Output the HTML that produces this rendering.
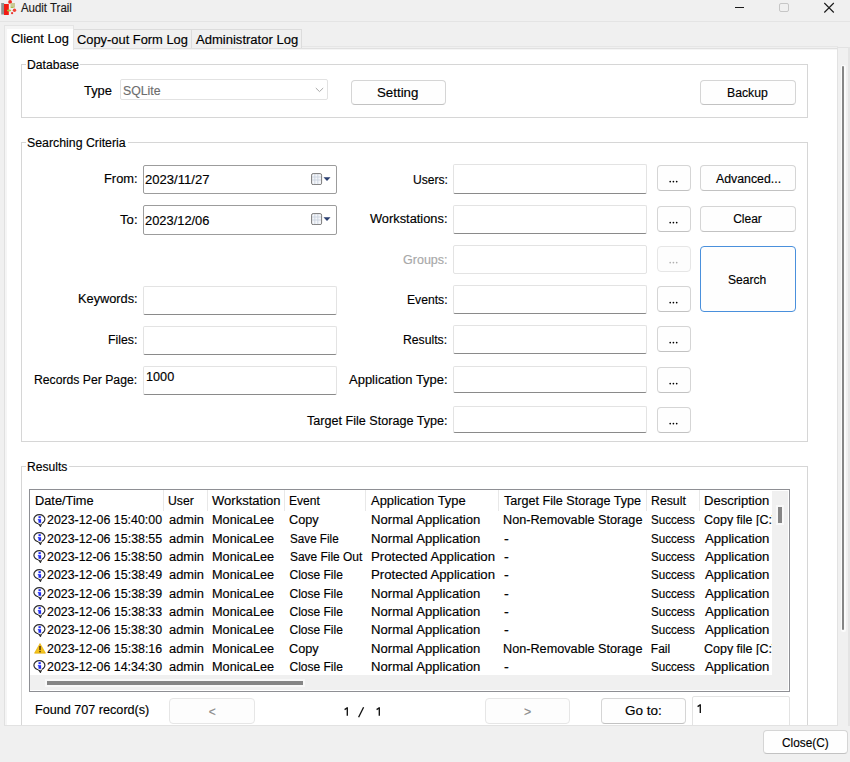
<!DOCTYPE html>
<html><head><meta charset="utf-8"><title>Audit Trail</title>
<style>
html,body{margin:0;padding:0;}
body{width:850px;height:762px;overflow:hidden;position:relative;background:#f0f0f0;font-family:'Liberation Sans', sans-serif;-webkit-text-stroke:0.15px currentColor;}
</style></head><body>
<div style="position:absolute;left:0.00px;top:21.00px;width:850.00px;height:1.00px;box-sizing:border-box;background:#e4e4e4;"></div>
<svg style="position:absolute;left:0;top:0" width="17" height="17" viewBox="0 0 17 17">
<rect x="1.2" y="3" width="3" height="11.5" fill="#8c9494"/>
<rect x="4" y="4" width="4.8" height="11" fill="#f21a12"/>
<circle cx="10.1" cy="1.9" r="1.9" fill="#f02a20"/>
<rect x="10.5" y="3" width="4.5" height="4.6" fill="#c9c995"/>
<rect x="10.8" y="6.8" width="2.6" height="1.2" fill="#a8c048"/>
<ellipse cx="9" cy="10.5" rx="2.2" ry="1.1" fill="#a6c23e"/>
<circle cx="14.5" cy="10.3" r="1.7" fill="#f04438"/>
<circle cx="12.1" cy="13.2" r="1.1" fill="#e83830"/>
</svg>
<div style="position:absolute;left:21.10px;top:2.34px;font-size:12.0px;line-height:12.0px;color:#1a1a1a;white-space:pre;transform:scaleX(0.9524);transform-origin:0 0;">Audit Trail</div>
<div style="position:absolute;left:735.00px;top:7.00px;width:9.00px;height:1.00px;box-sizing:border-box;background:#1a1a1a;"></div>
<div style="position:absolute;left:779.00px;top:3.00px;width:10.00px;height:9.00px;box-sizing:border-box;border:1px solid #c6c6c6;border-radius:2px;"></div>
<svg style="position:absolute;left:823px;top:2px" width="12" height="12" viewBox="0 0 12 12"><path d="M1.3 1 L10.8 10.5 M10.8 1 L1.3 10.5" stroke="#1a1a1a" stroke-width="1.1"/></svg>
<div style="position:absolute;left:73.00px;top:29.00px;width:119.00px;height:20.00px;box-sizing:border-box;background:#f0f0f0;border:1px solid #dcdcdc;border-bottom:none;"></div>
<div style="position:absolute;left:191.00px;top:29.00px;width:111.00px;height:20.00px;box-sizing:border-box;background:#f0f0f0;border:1px solid #dcdcdc;border-bottom:none;"></div>
<div style="position:absolute;left:302.00px;top:46.00px;width:536.00px;height:1.00px;box-sizing:border-box;background:#e6e6e6;"></div>
<div style="position:absolute;left:4.00px;top:48.00px;width:834.00px;height:678.00px;box-sizing:border-box;background:#fff;border:1px solid #e0e0e0;box-shadow:inset 2px 1px 0 #f5f5f5;"></div>
<div style="position:absolute;left:4.00px;top:25.00px;width:70.00px;height:25.00px;box-sizing:border-box;background:#f5f5f5;border:1px solid #e4e4e4;border-bottom:none;"></div>
<div style="position:absolute;left:7.00px;top:29.00px;width:66.00px;height:22.00px;box-sizing:border-box;background:#fff;"></div>
<div style="position:absolute;left:10.86px;top:32.94px;font-size:12.0px;line-height:12.0px;color:#000;white-space:pre;transform:scaleX(1.0721);transform-origin:0 0;">Client Log</div>
<div style="position:absolute;left:76.96px;top:34.04px;font-size:12.0px;line-height:12.0px;color:#000;white-space:pre;transform:scaleX(1.0725);transform-origin:0 0;">Copy-out Form Log</div>
<div style="position:absolute;left:196.39px;top:34.04px;font-size:12.0px;line-height:12.0px;color:#000;white-space:pre;transform:scaleX(1.0869);transform-origin:0 0;">Administrator Log</div>
<div style="position:absolute;left:837.00px;top:47.00px;width:13.00px;height:679.00px;box-sizing:border-box;background:#f0f0f0;border-left:1px solid #e2e2e2;border-top:1px solid #e2e2e2;"></div>
<div style="position:absolute;left:848.00px;top:47.00px;width:2.00px;height:679.00px;box-sizing:border-box;background:#e4e4e4;"></div>
<div style="position:absolute;left:840.60px;top:64.50px;width:5.00px;height:567.00px;box-sizing:border-box;background:#fbfbfb;border-radius:2px;"></div>
<div style="position:absolute;left:842.00px;top:66.00px;width:2.20px;height:564.00px;box-sizing:border-box;background:#858585;border-radius:1px;"></div>
<div style="position:absolute;left:21.00px;top:64.00px;width:787.00px;height:54.00px;box-sizing:border-box;border:1px solid #d6d6d6;"></div>
<div style="position:absolute;left:25.50px;top:58.00px;width:54.70px;height:12.00px;box-sizing:border-box;background:#fff;"></div>
<div style="position:absolute;left:27.19px;top:58.74px;font-size:12.0px;line-height:12.0px;color:#000;white-space:pre;transform:scaleX(1.0120);transform-origin:0 0;">Database</div>
<div style="position:absolute;left:84.18px;top:84.94px;font-size:12.0px;line-height:12.0px;color:#000;white-space:pre;transform:scaleX(1.0754);transform-origin:0 0;">Type</div>
<div style="position:absolute;left:120.00px;top:79.00px;width:208.00px;height:21.00px;box-sizing:border-box;background:#fff;border:1px solid #e2e2e2;border-radius:2px;"></div>
<div style="position:absolute;left:122.99px;top:84.64px;font-size:12.0px;line-height:12.0px;color:#6d6d6d;white-space:pre;transform:scaleX(1.0224);transform-origin:0 0;">SQLite</div>
<svg style="position:absolute;left:315px;top:87px" width="9" height="6" viewBox="0 0 9 6"><path d="M0.8 1 L4.5 4.6 L8.2 1" stroke="#a8a8a8" stroke-width="1" fill="none"/></svg>
<div style="position:absolute;left:351.00px;top:80.00px;width:95.00px;height:25.00px;box-sizing:border-box;background:#fefefe;border:1px solid #d5d5d5;border-bottom-color:#c2c2c2;border-radius:4px;"></div>
<div style="position:absolute;left:377.45px;top:87.14px;font-size:12.0px;line-height:12.0px;color:#000;white-space:pre;transform:scaleX(1.1080);transform-origin:0 0;">Setting</div>
<div style="position:absolute;left:700.00px;top:80.00px;width:96.00px;height:25.00px;box-sizing:border-box;background:#fefefe;border:1px solid #d5d5d5;border-bottom-color:#c2c2c2;border-radius:4px;"></div>
<div style="position:absolute;left:727.38px;top:86.94px;font-size:12.0px;line-height:12.0px;color:#000;white-space:pre;transform:scaleX(1.0182);transform-origin:0 0;">Backup</div>
<div style="position:absolute;left:21.00px;top:142.00px;width:787.00px;height:300.00px;box-sizing:border-box;border:1px solid #d6d6d6;"></div>
<div style="position:absolute;left:25.50px;top:136.00px;width:102.00px;height:12.00px;box-sizing:border-box;background:#fff;"></div>
<div style="position:absolute;left:27.49px;top:136.84px;font-size:12.0px;line-height:12.0px;color:#000;white-space:pre;transform:scaleX(1.0272);transform-origin:0 0;">Searching Criteria</div>
<div style="position:absolute;left:103.83px;top:173.24px;font-size:12.0px;line-height:12.0px;color:#000;white-space:pre;transform:scaleX(1.0717);transform-origin:0 0;">From:</div>
<div style="position:absolute;left:143.00px;top:165.00px;width:194.00px;height:29.00px;box-sizing:border-box;background:#fff;border:1px solid #9c9c9c;border-radius:2px;"></div>
<div style="position:absolute;left:144.75px;top:174.14px;font-size:12.0px;line-height:12.0px;color:#000;white-space:pre;transform:scaleX(1.0897);transform-origin:0 0;">2023/11/27</div>
<svg style="position:absolute;left:311px;top:172.8px" width="21" height="12" viewBox="0 0 21 12">
<rect x="0.6" y="0.6" width="10" height="11" rx="1.5" fill="#f4f6fa" stroke="#7a7a7a" stroke-width="1"/>
<path d="M3.8 1 V11 M6.8 1 V11 M1 4 H10 M1 7 H10" stroke="#c8d0dc" stroke-width="0.8"/>
<path d="M12.5 4.2 L19.5 4.2 L16 8 Z" fill="#2b3f70"/>
</svg>
<div style="position:absolute;left:119.67px;top:213.64px;font-size:12.0px;line-height:12.0px;color:#000;white-space:pre;transform:scaleX(1.0959);transform-origin:0 0;">To:</div>
<div style="position:absolute;left:143.00px;top:205.00px;width:194.00px;height:30.00px;box-sizing:border-box;background:#fff;border:1px solid #9c9c9c;border-radius:2px;"></div>
<div style="position:absolute;left:144.76px;top:214.84px;font-size:12.0px;line-height:12.0px;color:#000;white-space:pre;transform:scaleX(1.0730);transform-origin:0 0;">2023/12/06</div>
<svg style="position:absolute;left:311px;top:212.8px" width="21" height="12" viewBox="0 0 21 12">
<rect x="0.6" y="0.6" width="10" height="11" rx="1.5" fill="#f4f6fa" stroke="#7a7a7a" stroke-width="1"/>
<path d="M3.8 1 V11 M6.8 1 V11 M1 4 H10 M1 7 H10" stroke="#c8d0dc" stroke-width="0.8"/>
<path d="M12.5 4.2 L19.5 4.2 L16 8 Z" fill="#2b3f70"/>
</svg>
<div style="position:absolute;left:143.00px;top:286.00px;width:194.00px;height:29.00px;box-sizing:border-box;background:#fff;border:1px solid #e3e3e3;border-bottom:1px solid #8a8a8a;border-radius:2px;"></div>
<div style="position:absolute;left:77.94px;top:293.44px;font-size:12.0px;line-height:12.0px;color:#000;white-space:pre;transform:scaleX(1.0648);transform-origin:0 0;">Keywords:</div>
<div style="position:absolute;left:143.00px;top:326.00px;width:194.00px;height:29.00px;box-sizing:border-box;background:#fff;border:1px solid #e3e3e3;border-bottom:1px solid #8a8a8a;border-radius:2px;"></div>
<div style="position:absolute;left:108.28px;top:334.14px;font-size:12.0px;line-height:12.0px;color:#000;white-space:pre;transform:scaleX(1.0226);transform-origin:0 0;">Files:</div>
<div style="position:absolute;left:143.00px;top:366.00px;width:194.00px;height:29.00px;box-sizing:border-box;background:#fff;border:1px solid #e3e3e3;border-bottom:1px solid #8a8a8a;border-radius:2px;"></div>
<div style="position:absolute;left:34.48px;top:374.14px;font-size:12.0px;line-height:12.0px;color:#000;white-space:pre;transform:scaleX(1.0171);transform-origin:0 0;">Records Per Page:</div>
<div style="position:absolute;left:146.35px;top:371.14px;font-size:12.0px;line-height:12.0px;color:#000;white-space:pre;transform:scaleX(1.0553);transform-origin:0 0;">1000</div>
<div style="position:absolute;left:453.00px;top:164.00px;width:194.00px;height:30.00px;box-sizing:border-box;background:#fff;border:1px solid #e3e3e3;border-bottom:1px solid #8a8a8a;border-radius:2px;"></div>
<div style="position:absolute;left:412.69px;top:173.64px;font-size:12.0px;line-height:12.0px;color:#000;white-space:pre;transform:scaleX(1.0092);transform-origin:0 0;">Users:</div>
<div style="position:absolute;left:657.00px;top:165.00px;width:34.00px;height:26.00px;box-sizing:border-box;background:#fefefe;border:1px solid #d5d5d5;border-bottom-color:#c2c2c2;border-radius:4px;"></div>
<svg style="position:absolute;left:666px;top:178px" width="14" height="8" viewBox="0 0 14 8"><circle cx="4.2" cy="3.6" r="0.85" fill="#000"/><circle cx="7.4" cy="3.6" r="0.85" fill="#000"/><circle cx="10.7" cy="3.6" r="0.85" fill="#000"/></svg>
<div style="position:absolute;left:453.00px;top:205.00px;width:194.00px;height:29.00px;box-sizing:border-box;background:#fff;border:1px solid #e3e3e3;border-bottom:1px solid #8a8a8a;border-radius:2px;"></div>
<div style="position:absolute;left:370.29px;top:213.14px;font-size:12.0px;line-height:12.0px;color:#000;white-space:pre;transform:scaleX(1.0687);transform-origin:0 0;">Workstations:</div>
<div style="position:absolute;left:657.00px;top:206.00px;width:34.00px;height:26.00px;box-sizing:border-box;background:#fefefe;border:1px solid #d5d5d5;border-bottom-color:#c2c2c2;border-radius:4px;"></div>
<svg style="position:absolute;left:666px;top:219px" width="14" height="8" viewBox="0 0 14 8"><circle cx="4.2" cy="3.6" r="0.85" fill="#000"/><circle cx="7.4" cy="3.6" r="0.85" fill="#000"/><circle cx="10.7" cy="3.6" r="0.85" fill="#000"/></svg>
<div style="position:absolute;left:453.00px;top:245.00px;width:194.00px;height:29.00px;box-sizing:border-box;background:#fff;border:1px solid #e3e3e3;border-radius:2px;"></div>
<div style="position:absolute;left:402.97px;top:254.24px;font-size:12.0px;line-height:12.0px;color:#a8a8a8;white-space:pre;transform:scaleX(1.0439);transform-origin:0 0;">Groups:</div>
<div style="position:absolute;left:657.00px;top:246.00px;width:34.00px;height:26.00px;box-sizing:border-box;background:#fdfdfd;border:1px solid #e6e6e6;border-radius:4px;"></div>
<svg style="position:absolute;left:666px;top:259px" width="14" height="8" viewBox="0 0 14 8"><circle cx="4.2" cy="3.6" r="0.85" fill="#b0b0b0"/><circle cx="7.4" cy="3.6" r="0.85" fill="#b0b0b0"/><circle cx="10.7" cy="3.6" r="0.85" fill="#b0b0b0"/></svg>
<div style="position:absolute;left:453.00px;top:285.00px;width:194.00px;height:29.00px;box-sizing:border-box;background:#fff;border:1px solid #e3e3e3;border-bottom:1px solid #8a8a8a;border-radius:2px;"></div>
<div style="position:absolute;left:406.99px;top:293.84px;font-size:12.0px;line-height:12.0px;color:#000;white-space:pre;transform:scaleX(1.0132);transform-origin:0 0;">Events:</div>
<div style="position:absolute;left:657.00px;top:286.00px;width:34.00px;height:26.00px;box-sizing:border-box;background:#fefefe;border:1px solid #d5d5d5;border-bottom-color:#c2c2c2;border-radius:4px;"></div>
<svg style="position:absolute;left:666px;top:299px" width="14" height="8" viewBox="0 0 14 8"><circle cx="4.2" cy="3.6" r="0.85" fill="#000"/><circle cx="7.4" cy="3.6" r="0.85" fill="#000"/><circle cx="10.7" cy="3.6" r="0.85" fill="#000"/></svg>
<div style="position:absolute;left:453.00px;top:325.00px;width:194.00px;height:29.00px;box-sizing:border-box;background:#fff;border:1px solid #e3e3e3;border-bottom:1px solid #8a8a8a;border-radius:2px;"></div>
<div style="position:absolute;left:403.38px;top:334.24px;font-size:12.0px;line-height:12.0px;color:#000;white-space:pre;transform:scaleX(1.0169);transform-origin:0 0;">Results:</div>
<div style="position:absolute;left:657.00px;top:326.00px;width:34.00px;height:26.00px;box-sizing:border-box;background:#fefefe;border:1px solid #d5d5d5;border-bottom-color:#c2c2c2;border-radius:4px;"></div>
<svg style="position:absolute;left:666px;top:339px" width="14" height="8" viewBox="0 0 14 8"><circle cx="4.2" cy="3.6" r="0.85" fill="#000"/><circle cx="7.4" cy="3.6" r="0.85" fill="#000"/><circle cx="10.7" cy="3.6" r="0.85" fill="#000"/></svg>
<div style="position:absolute;left:453.00px;top:366.00px;width:194.00px;height:27.00px;box-sizing:border-box;background:#fff;border:1px solid #e3e3e3;border-bottom:1px solid #8a8a8a;border-radius:2px;"></div>
<div style="position:absolute;left:348.89px;top:374.44px;font-size:12.0px;line-height:12.0px;color:#000;white-space:pre;transform:scaleX(1.0822);transform-origin:0 0;">Application Type:</div>
<div style="position:absolute;left:657.00px;top:367.00px;width:34.00px;height:26.00px;box-sizing:border-box;background:#fefefe;border:1px solid #d5d5d5;border-bottom-color:#c2c2c2;border-radius:4px;"></div>
<svg style="position:absolute;left:666px;top:380px" width="14" height="8" viewBox="0 0 14 8"><circle cx="4.2" cy="3.6" r="0.85" fill="#000"/><circle cx="7.4" cy="3.6" r="0.85" fill="#000"/><circle cx="10.7" cy="3.6" r="0.85" fill="#000"/></svg>
<div style="position:absolute;left:453.00px;top:406.00px;width:194.00px;height:27.00px;box-sizing:border-box;background:#fff;border:1px solid #e3e3e3;border-bottom:1px solid #8a8a8a;border-radius:2px;"></div>
<div style="position:absolute;left:306.99px;top:414.54px;font-size:12.0px;line-height:12.0px;color:#000;white-space:pre;transform:scaleX(1.0498);transform-origin:0 0;">Target File Storage Type:</div>
<div style="position:absolute;left:657.00px;top:407.00px;width:34.00px;height:26.00px;box-sizing:border-box;background:#fefefe;border:1px solid #d5d5d5;border-bottom-color:#c2c2c2;border-radius:4px;"></div>
<svg style="position:absolute;left:666px;top:420px" width="14" height="8" viewBox="0 0 14 8"><circle cx="4.2" cy="3.6" r="0.85" fill="#000"/><circle cx="7.4" cy="3.6" r="0.85" fill="#000"/><circle cx="10.7" cy="3.6" r="0.85" fill="#000"/></svg>
<div style="position:absolute;left:700.00px;top:165.00px;width:96.00px;height:26.00px;box-sizing:border-box;background:#fefefe;border:1px solid #d5d5d5;border-bottom-color:#c2c2c2;border-radius:4px;"></div>
<div style="position:absolute;left:715.70px;top:172.84px;font-size:12.0px;line-height:12.0px;color:#000;white-space:pre;transform:scaleX(1.0273);transform-origin:0 0;">Advanced...</div>
<div style="position:absolute;left:700.00px;top:206.00px;width:96.00px;height:26.00px;box-sizing:border-box;background:#fefefe;border:1px solid #d5d5d5;border-bottom-color:#c2c2c2;border-radius:4px;"></div>
<div style="position:absolute;left:733.20px;top:213.24px;font-size:12.0px;line-height:12.0px;color:#000;white-space:pre;">Clear</div>
<div style="position:absolute;left:700.00px;top:246.00px;width:96.00px;height:66.00px;box-sizing:border-box;background:#fefefe;border:1.7px solid #4a90dc;border-radius:4px;"></div>
<div style="position:absolute;left:728.40px;top:274.04px;font-size:12.0px;line-height:12.0px;color:#000;white-space:pre;transform:scaleX(1.0082);transform-origin:0 0;">Search</div>
<div style="position:absolute;left:21.00px;top:466.00px;width:787.00px;height:294.00px;box-sizing:border-box;border:1px solid #d6d6d6;"></div>
<div style="position:absolute;left:25.50px;top:460.00px;width:43.80px;height:12.00px;box-sizing:border-box;background:#fff;"></div>
<div style="position:absolute;left:27.19px;top:460.84px;font-size:12.0px;line-height:12.0px;color:#000;white-space:pre;transform:scaleX(1.0078);transform-origin:0 0;">Results</div>
<div style="position:absolute;left:29.00px;top:489.00px;width:761.00px;height:203.00px;box-sizing:border-box;background:#fff;border:1px solid #8e8f94;"></div>
<div style="position:absolute;left:163.00px;top:490.00px;width:1.00px;height:21.00px;box-sizing:border-box;background:#e8e8e8;"></div>
<div style="position:absolute;left:207.00px;top:490.00px;width:1.00px;height:21.00px;box-sizing:border-box;background:#e8e8e8;"></div>
<div style="position:absolute;left:284.00px;top:490.00px;width:1.00px;height:21.00px;box-sizing:border-box;background:#e8e8e8;"></div>
<div style="position:absolute;left:365.00px;top:490.00px;width:1.00px;height:21.00px;box-sizing:border-box;background:#e8e8e8;"></div>
<div style="position:absolute;left:498.00px;top:490.00px;width:1.00px;height:21.00px;box-sizing:border-box;background:#e8e8e8;"></div>
<div style="position:absolute;left:646.00px;top:490.00px;width:1.00px;height:21.00px;box-sizing:border-box;background:#e8e8e8;"></div>
<div style="position:absolute;left:699.00px;top:490.00px;width:1.00px;height:21.00px;box-sizing:border-box;background:#e8e8e8;"></div>
<div style="position:absolute;left:34.93px;top:495.44px;font-size:12.0px;line-height:12.0px;color:#000;white-space:pre;transform:scaleX(1.0655);transform-origin:0 0;">Date/Time</div>
<div style="position:absolute;left:168.19px;top:495.44px;font-size:12.0px;line-height:12.0px;color:#000;white-space:pre;transform:scaleX(1.0165);transform-origin:0 0;">User</div>
<div style="position:absolute;left:212.49px;top:495.44px;font-size:12.0px;line-height:12.0px;color:#000;white-space:pre;transform:scaleX(1.0867);transform-origin:0 0;">Workstation</div>
<div style="position:absolute;left:289.19px;top:495.44px;font-size:12.0px;line-height:12.0px;color:#000;white-space:pre;transform:scaleX(1.0068);transform-origin:0 0;">Event</div>
<div style="position:absolute;left:371.19px;top:495.44px;font-size:12.0px;line-height:12.0px;color:#000;white-space:pre;transform:scaleX(1.0780);transform-origin:0 0;">Application Type</div>
<div style="position:absolute;left:503.88px;top:495.44px;font-size:12.0px;line-height:12.0px;color:#000;white-space:pre;transform:scaleX(1.0501);transform-origin:0 0;">Target File Storage Type</div>
<div style="position:absolute;left:650.88px;top:495.44px;font-size:12.0px;line-height:12.0px;color:#000;white-space:pre;transform:scaleX(1.0243);transform-origin:0 0;">Result</div>
<div style="position:absolute;left:703.71px;top:495.44px;font-size:12.0px;line-height:12.0px;color:#000;white-space:pre;transform:scaleX(1.0875);transform-origin:0 0;">Description</div>
<svg style="position:absolute;left:33.2px;top:513.70px" width="14" height="14" viewBox="0 0 14 14">
<path d="M5.6 9.6 L7.5 12.4 L8.7 9.3" fill="#fff" stroke="#2e2e2e" stroke-width="1.2" stroke-linejoin="round"/>
<ellipse cx="6.4" cy="5.3" rx="5.5" ry="4.6" fill="#fff" stroke="#2e2e2e" stroke-width="1.2"/>
<path d="M5.4 9.2 L8.8 9.2" stroke="#fff" stroke-width="1.4"/>
<rect x="5.5" y="2.2" width="2.3" height="2.0" fill="#1f2cf5"/>
<rect x="5.5" y="5.2" width="2.6" height="3.6" fill="#1f2cf5"/>
<rect x="4.8" y="5.2" width="1.2" height="1.0" fill="#1f2cf5"/>
</svg>
<div style="position:absolute;left:47.18px;top:514.44px;font-size:12.0px;line-height:12.0px;color:#000;white-space:pre;transform:scaleX(1.0326);transform-origin:0 0;">2023-12-06 15:40:00</div>
<div style="position:absolute;left:168.56px;top:514.44px;font-size:12.0px;line-height:12.0px;color:#000;white-space:pre;transform:scaleX(1.0701);transform-origin:0 0;">admin</div>
<div style="position:absolute;left:211.54px;top:514.44px;font-size:12.0px;line-height:12.0px;color:#000;white-space:pre;transform:scaleX(1.0577);transform-origin:0 0;">MonicaLee</div>
<div style="position:absolute;left:289.46px;top:514.44px;font-size:12.0px;line-height:12.0px;color:#000;white-space:pre;transform:scaleX(1.0584);transform-origin:0 0;">Copy</div>
<div style="position:absolute;left:370.71px;top:514.44px;font-size:12.0px;line-height:12.0px;color:#000;white-space:pre;transform:scaleX(1.0926);transform-origin:0 0;">Normal Application</div>
<div style="position:absolute;left:503.34px;top:514.44px;font-size:12.0px;line-height:12.0px;color:#000;white-space:pre;transform:scaleX(1.0559);transform-origin:0 0;">Non-Removable Storage</div>
<div style="position:absolute;left:651.32px;top:514.44px;font-size:12.0px;line-height:12.0px;color:#000;white-space:pre;transform:scaleX(0.9685);transform-origin:0 0;">Success</div>
<div style="position:absolute;left:704.18px;top:514.44px;font-size:12.0px;line-height:12.0px;color:#000;white-space:pre;transform:scaleX(1.0400);transform-origin:0 0;width:65.50px;overflow:hidden;">Copy file [C:\Users</div>
<svg style="position:absolute;left:33.2px;top:532.04px" width="14" height="14" viewBox="0 0 14 14">
<path d="M5.6 9.6 L7.5 12.4 L8.7 9.3" fill="#fff" stroke="#2e2e2e" stroke-width="1.2" stroke-linejoin="round"/>
<ellipse cx="6.4" cy="5.3" rx="5.5" ry="4.6" fill="#fff" stroke="#2e2e2e" stroke-width="1.2"/>
<path d="M5.4 9.2 L8.8 9.2" stroke="#fff" stroke-width="1.4"/>
<rect x="5.5" y="2.2" width="2.3" height="2.0" fill="#1f2cf5"/>
<rect x="5.5" y="5.2" width="2.6" height="3.6" fill="#1f2cf5"/>
<rect x="4.8" y="5.2" width="1.2" height="1.0" fill="#1f2cf5"/>
</svg>
<div style="position:absolute;left:47.18px;top:532.78px;font-size:12.0px;line-height:12.0px;color:#000;white-space:pre;transform:scaleX(1.0335);transform-origin:0 0;">2023-12-06 15:38:55</div>
<div style="position:absolute;left:168.56px;top:532.78px;font-size:12.0px;line-height:12.0px;color:#000;white-space:pre;transform:scaleX(1.0701);transform-origin:0 0;">admin</div>
<div style="position:absolute;left:211.54px;top:532.78px;font-size:12.0px;line-height:12.0px;color:#000;white-space:pre;transform:scaleX(1.0577);transform-origin:0 0;">MonicaLee</div>
<div style="position:absolute;left:289.61px;top:532.78px;font-size:12.0px;line-height:12.0px;color:#000;white-space:pre;transform:scaleX(0.9735);transform-origin:0 0;">Save File</div>
<div style="position:absolute;left:370.71px;top:532.78px;font-size:12.0px;line-height:12.0px;color:#000;white-space:pre;transform:scaleX(1.0926);transform-origin:0 0;">Normal Application</div>
<div style="position:absolute;left:503.80px;top:532.78px;font-size:12.0px;line-height:12.0px;color:#000;white-space:pre;transform:scaleX(1.2000);transform-origin:0 0;">-</div>
<div style="position:absolute;left:651.32px;top:532.78px;font-size:12.0px;line-height:12.0px;color:#000;white-space:pre;transform:scaleX(0.9685);transform-origin:0 0;">Success</div>
<div style="position:absolute;left:704.69px;top:532.78px;font-size:12.0px;line-height:12.0px;color:#000;white-space:pre;transform:scaleX(1.0969);transform-origin:0 0;">Application</div>
<svg style="position:absolute;left:33.2px;top:550.38px" width="14" height="14" viewBox="0 0 14 14">
<path d="M5.6 9.6 L7.5 12.4 L8.7 9.3" fill="#fff" stroke="#2e2e2e" stroke-width="1.2" stroke-linejoin="round"/>
<ellipse cx="6.4" cy="5.3" rx="5.5" ry="4.6" fill="#fff" stroke="#2e2e2e" stroke-width="1.2"/>
<path d="M5.4 9.2 L8.8 9.2" stroke="#fff" stroke-width="1.4"/>
<rect x="5.5" y="2.2" width="2.3" height="2.0" fill="#1f2cf5"/>
<rect x="5.5" y="5.2" width="2.6" height="3.6" fill="#1f2cf5"/>
<rect x="4.8" y="5.2" width="1.2" height="1.0" fill="#1f2cf5"/>
</svg>
<div style="position:absolute;left:47.18px;top:551.12px;font-size:12.0px;line-height:12.0px;color:#000;white-space:pre;transform:scaleX(1.0326);transform-origin:0 0;">2023-12-06 15:38:50</div>
<div style="position:absolute;left:168.56px;top:551.12px;font-size:12.0px;line-height:12.0px;color:#000;white-space:pre;transform:scaleX(1.0701);transform-origin:0 0;">admin</div>
<div style="position:absolute;left:211.54px;top:551.12px;font-size:12.0px;line-height:12.0px;color:#000;white-space:pre;transform:scaleX(1.0577);transform-origin:0 0;">MonicaLee</div>
<div style="position:absolute;left:289.60px;top:551.12px;font-size:12.0px;line-height:12.0px;color:#000;white-space:pre;transform:scaleX(0.9945);transform-origin:0 0;">Save File Out</div>
<div style="position:absolute;left:370.70px;top:551.12px;font-size:12.0px;line-height:12.0px;color:#000;white-space:pre;transform:scaleX(1.1000);transform-origin:0 0;">Protected Application</div>
<div style="position:absolute;left:503.80px;top:551.12px;font-size:12.0px;line-height:12.0px;color:#000;white-space:pre;transform:scaleX(1.2000);transform-origin:0 0;">-</div>
<div style="position:absolute;left:651.32px;top:551.12px;font-size:12.0px;line-height:12.0px;color:#000;white-space:pre;transform:scaleX(0.9685);transform-origin:0 0;">Success</div>
<div style="position:absolute;left:704.69px;top:551.12px;font-size:12.0px;line-height:12.0px;color:#000;white-space:pre;transform:scaleX(1.0969);transform-origin:0 0;">Application</div>
<svg style="position:absolute;left:33.2px;top:568.72px" width="14" height="14" viewBox="0 0 14 14">
<path d="M5.6 9.6 L7.5 12.4 L8.7 9.3" fill="#fff" stroke="#2e2e2e" stroke-width="1.2" stroke-linejoin="round"/>
<ellipse cx="6.4" cy="5.3" rx="5.5" ry="4.6" fill="#fff" stroke="#2e2e2e" stroke-width="1.2"/>
<path d="M5.4 9.2 L8.8 9.2" stroke="#fff" stroke-width="1.4"/>
<rect x="5.5" y="2.2" width="2.3" height="2.0" fill="#1f2cf5"/>
<rect x="5.5" y="5.2" width="2.6" height="3.6" fill="#1f2cf5"/>
<rect x="4.8" y="5.2" width="1.2" height="1.0" fill="#1f2cf5"/>
</svg>
<div style="position:absolute;left:47.18px;top:569.46px;font-size:12.0px;line-height:12.0px;color:#000;white-space:pre;transform:scaleX(1.0335);transform-origin:0 0;">2023-12-06 15:38:49</div>
<div style="position:absolute;left:168.56px;top:569.46px;font-size:12.0px;line-height:12.0px;color:#000;white-space:pre;transform:scaleX(1.0701);transform-origin:0 0;">admin</div>
<div style="position:absolute;left:211.54px;top:569.46px;font-size:12.0px;line-height:12.0px;color:#000;white-space:pre;transform:scaleX(1.0577);transform-origin:0 0;">MonicaLee</div>
<div style="position:absolute;left:289.50px;top:569.46px;font-size:12.0px;line-height:12.0px;color:#000;white-space:pre;">Close File</div>
<div style="position:absolute;left:370.70px;top:569.46px;font-size:12.0px;line-height:12.0px;color:#000;white-space:pre;transform:scaleX(1.1000);transform-origin:0 0;">Protected Application</div>
<div style="position:absolute;left:503.80px;top:569.46px;font-size:12.0px;line-height:12.0px;color:#000;white-space:pre;transform:scaleX(1.2000);transform-origin:0 0;">-</div>
<div style="position:absolute;left:651.32px;top:569.46px;font-size:12.0px;line-height:12.0px;color:#000;white-space:pre;transform:scaleX(0.9685);transform-origin:0 0;">Success</div>
<div style="position:absolute;left:704.69px;top:569.46px;font-size:12.0px;line-height:12.0px;color:#000;white-space:pre;transform:scaleX(1.0969);transform-origin:0 0;">Application</div>
<svg style="position:absolute;left:33.2px;top:587.06px" width="14" height="14" viewBox="0 0 14 14">
<path d="M5.6 9.6 L7.5 12.4 L8.7 9.3" fill="#fff" stroke="#2e2e2e" stroke-width="1.2" stroke-linejoin="round"/>
<ellipse cx="6.4" cy="5.3" rx="5.5" ry="4.6" fill="#fff" stroke="#2e2e2e" stroke-width="1.2"/>
<path d="M5.4 9.2 L8.8 9.2" stroke="#fff" stroke-width="1.4"/>
<rect x="5.5" y="2.2" width="2.3" height="2.0" fill="#1f2cf5"/>
<rect x="5.5" y="5.2" width="2.6" height="3.6" fill="#1f2cf5"/>
<rect x="4.8" y="5.2" width="1.2" height="1.0" fill="#1f2cf5"/>
</svg>
<div style="position:absolute;left:47.18px;top:587.80px;font-size:12.0px;line-height:12.0px;color:#000;white-space:pre;transform:scaleX(1.0335);transform-origin:0 0;">2023-12-06 15:38:39</div>
<div style="position:absolute;left:168.56px;top:587.80px;font-size:12.0px;line-height:12.0px;color:#000;white-space:pre;transform:scaleX(1.0701);transform-origin:0 0;">admin</div>
<div style="position:absolute;left:211.54px;top:587.80px;font-size:12.0px;line-height:12.0px;color:#000;white-space:pre;transform:scaleX(1.0577);transform-origin:0 0;">MonicaLee</div>
<div style="position:absolute;left:289.50px;top:587.80px;font-size:12.0px;line-height:12.0px;color:#000;white-space:pre;">Close File</div>
<div style="position:absolute;left:370.71px;top:587.80px;font-size:12.0px;line-height:12.0px;color:#000;white-space:pre;transform:scaleX(1.0926);transform-origin:0 0;">Normal Application</div>
<div style="position:absolute;left:503.80px;top:587.80px;font-size:12.0px;line-height:12.0px;color:#000;white-space:pre;transform:scaleX(1.2000);transform-origin:0 0;">-</div>
<div style="position:absolute;left:651.32px;top:587.80px;font-size:12.0px;line-height:12.0px;color:#000;white-space:pre;transform:scaleX(0.9685);transform-origin:0 0;">Success</div>
<div style="position:absolute;left:704.69px;top:587.80px;font-size:12.0px;line-height:12.0px;color:#000;white-space:pre;transform:scaleX(1.0969);transform-origin:0 0;">Application</div>
<svg style="position:absolute;left:33.2px;top:605.40px" width="14" height="14" viewBox="0 0 14 14">
<path d="M5.6 9.6 L7.5 12.4 L8.7 9.3" fill="#fff" stroke="#2e2e2e" stroke-width="1.2" stroke-linejoin="round"/>
<ellipse cx="6.4" cy="5.3" rx="5.5" ry="4.6" fill="#fff" stroke="#2e2e2e" stroke-width="1.2"/>
<path d="M5.4 9.2 L8.8 9.2" stroke="#fff" stroke-width="1.4"/>
<rect x="5.5" y="2.2" width="2.3" height="2.0" fill="#1f2cf5"/>
<rect x="5.5" y="5.2" width="2.6" height="3.6" fill="#1f2cf5"/>
<rect x="4.8" y="5.2" width="1.2" height="1.0" fill="#1f2cf5"/>
</svg>
<div style="position:absolute;left:47.18px;top:606.14px;font-size:12.0px;line-height:12.0px;color:#000;white-space:pre;transform:scaleX(1.0335);transform-origin:0 0;">2023-12-06 15:38:33</div>
<div style="position:absolute;left:168.56px;top:606.14px;font-size:12.0px;line-height:12.0px;color:#000;white-space:pre;transform:scaleX(1.0701);transform-origin:0 0;">admin</div>
<div style="position:absolute;left:211.54px;top:606.14px;font-size:12.0px;line-height:12.0px;color:#000;white-space:pre;transform:scaleX(1.0577);transform-origin:0 0;">MonicaLee</div>
<div style="position:absolute;left:289.50px;top:606.14px;font-size:12.0px;line-height:12.0px;color:#000;white-space:pre;">Close File</div>
<div style="position:absolute;left:370.71px;top:606.14px;font-size:12.0px;line-height:12.0px;color:#000;white-space:pre;transform:scaleX(1.0926);transform-origin:0 0;">Normal Application</div>
<div style="position:absolute;left:503.80px;top:606.14px;font-size:12.0px;line-height:12.0px;color:#000;white-space:pre;transform:scaleX(1.2000);transform-origin:0 0;">-</div>
<div style="position:absolute;left:651.32px;top:606.14px;font-size:12.0px;line-height:12.0px;color:#000;white-space:pre;transform:scaleX(0.9685);transform-origin:0 0;">Success</div>
<div style="position:absolute;left:704.69px;top:606.14px;font-size:12.0px;line-height:12.0px;color:#000;white-space:pre;transform:scaleX(1.0969);transform-origin:0 0;">Application</div>
<svg style="position:absolute;left:33.2px;top:623.74px" width="14" height="14" viewBox="0 0 14 14">
<path d="M5.6 9.6 L7.5 12.4 L8.7 9.3" fill="#fff" stroke="#2e2e2e" stroke-width="1.2" stroke-linejoin="round"/>
<ellipse cx="6.4" cy="5.3" rx="5.5" ry="4.6" fill="#fff" stroke="#2e2e2e" stroke-width="1.2"/>
<path d="M5.4 9.2 L8.8 9.2" stroke="#fff" stroke-width="1.4"/>
<rect x="5.5" y="2.2" width="2.3" height="2.0" fill="#1f2cf5"/>
<rect x="5.5" y="5.2" width="2.6" height="3.6" fill="#1f2cf5"/>
<rect x="4.8" y="5.2" width="1.2" height="1.0" fill="#1f2cf5"/>
</svg>
<div style="position:absolute;left:47.18px;top:624.48px;font-size:12.0px;line-height:12.0px;color:#000;white-space:pre;transform:scaleX(1.0326);transform-origin:0 0;">2023-12-06 15:38:30</div>
<div style="position:absolute;left:168.56px;top:624.48px;font-size:12.0px;line-height:12.0px;color:#000;white-space:pre;transform:scaleX(1.0701);transform-origin:0 0;">admin</div>
<div style="position:absolute;left:211.54px;top:624.48px;font-size:12.0px;line-height:12.0px;color:#000;white-space:pre;transform:scaleX(1.0577);transform-origin:0 0;">MonicaLee</div>
<div style="position:absolute;left:289.50px;top:624.48px;font-size:12.0px;line-height:12.0px;color:#000;white-space:pre;">Close File</div>
<div style="position:absolute;left:370.71px;top:624.48px;font-size:12.0px;line-height:12.0px;color:#000;white-space:pre;transform:scaleX(1.0926);transform-origin:0 0;">Normal Application</div>
<div style="position:absolute;left:503.80px;top:624.48px;font-size:12.0px;line-height:12.0px;color:#000;white-space:pre;transform:scaleX(1.2000);transform-origin:0 0;">-</div>
<div style="position:absolute;left:651.32px;top:624.48px;font-size:12.0px;line-height:12.0px;color:#000;white-space:pre;transform:scaleX(0.9685);transform-origin:0 0;">Success</div>
<div style="position:absolute;left:704.69px;top:624.48px;font-size:12.0px;line-height:12.0px;color:#000;white-space:pre;transform:scaleX(1.0969);transform-origin:0 0;">Application</div>
<svg style="position:absolute;left:34px;top:643.28px" width="12" height="11" viewBox="0 0 12 11">
<path d="M6 0.5 L11.5 10.2 L0.5 10.2 Z" fill="#f3c31c" stroke="#e0a800" stroke-width="0.6" stroke-linejoin="round"/>
<rect x="5.2" y="3" width="1.6" height="4.2" fill="#5a3a10"/>
<rect x="5.2" y="8" width="1.6" height="1.3" fill="#5a3a10"/>
</svg>
<div style="position:absolute;left:47.18px;top:642.82px;font-size:12.0px;line-height:12.0px;color:#000;white-space:pre;transform:scaleX(1.0335);transform-origin:0 0;">2023-12-06 15:38:16</div>
<div style="position:absolute;left:168.56px;top:642.82px;font-size:12.0px;line-height:12.0px;color:#000;white-space:pre;transform:scaleX(1.0701);transform-origin:0 0;">admin</div>
<div style="position:absolute;left:211.54px;top:642.82px;font-size:12.0px;line-height:12.0px;color:#000;white-space:pre;transform:scaleX(1.0577);transform-origin:0 0;">MonicaLee</div>
<div style="position:absolute;left:289.46px;top:642.82px;font-size:12.0px;line-height:12.0px;color:#000;white-space:pre;transform:scaleX(1.0584);transform-origin:0 0;">Copy</div>
<div style="position:absolute;left:370.71px;top:642.82px;font-size:12.0px;line-height:12.0px;color:#000;white-space:pre;transform:scaleX(1.0926);transform-origin:0 0;">Normal Application</div>
<div style="position:absolute;left:503.34px;top:642.82px;font-size:12.0px;line-height:12.0px;color:#000;white-space:pre;transform:scaleX(1.0559);transform-origin:0 0;">Non-Removable Storage</div>
<div style="position:absolute;left:650.80px;top:642.82px;font-size:12.0px;line-height:12.0px;color:#000;white-space:pre;">Fail</div>
<div style="position:absolute;left:704.18px;top:642.82px;font-size:12.0px;line-height:12.0px;color:#000;white-space:pre;transform:scaleX(1.0400);transform-origin:0 0;width:65.50px;overflow:hidden;">Copy file [C:\Users</div>
<svg style="position:absolute;left:33.2px;top:660.42px" width="14" height="14" viewBox="0 0 14 14">
<path d="M5.6 9.6 L7.5 12.4 L8.7 9.3" fill="#fff" stroke="#2e2e2e" stroke-width="1.2" stroke-linejoin="round"/>
<ellipse cx="6.4" cy="5.3" rx="5.5" ry="4.6" fill="#fff" stroke="#2e2e2e" stroke-width="1.2"/>
<path d="M5.4 9.2 L8.8 9.2" stroke="#fff" stroke-width="1.4"/>
<rect x="5.5" y="2.2" width="2.3" height="2.0" fill="#1f2cf5"/>
<rect x="5.5" y="5.2" width="2.6" height="3.6" fill="#1f2cf5"/>
<rect x="4.8" y="5.2" width="1.2" height="1.0" fill="#1f2cf5"/>
</svg>
<div style="position:absolute;left:47.18px;top:661.16px;font-size:12.0px;line-height:12.0px;color:#000;white-space:pre;transform:scaleX(1.0326);transform-origin:0 0;">2023-12-06 14:34:30</div>
<div style="position:absolute;left:168.56px;top:661.16px;font-size:12.0px;line-height:12.0px;color:#000;white-space:pre;transform:scaleX(1.0701);transform-origin:0 0;">admin</div>
<div style="position:absolute;left:211.54px;top:661.16px;font-size:12.0px;line-height:12.0px;color:#000;white-space:pre;transform:scaleX(1.0577);transform-origin:0 0;">MonicaLee</div>
<div style="position:absolute;left:289.50px;top:661.16px;font-size:12.0px;line-height:12.0px;color:#000;white-space:pre;">Close File</div>
<div style="position:absolute;left:370.71px;top:661.16px;font-size:12.0px;line-height:12.0px;color:#000;white-space:pre;transform:scaleX(1.0926);transform-origin:0 0;">Normal Application</div>
<div style="position:absolute;left:503.80px;top:661.16px;font-size:12.0px;line-height:12.0px;color:#000;white-space:pre;transform:scaleX(1.2000);transform-origin:0 0;">-</div>
<div style="position:absolute;left:651.32px;top:661.16px;font-size:12.0px;line-height:12.0px;color:#000;white-space:pre;transform:scaleX(0.9685);transform-origin:0 0;">Success</div>
<div style="position:absolute;left:704.69px;top:661.16px;font-size:12.0px;line-height:12.0px;color:#000;white-space:pre;transform:scaleX(1.0969);transform-origin:0 0;">Application</div>
<div style="position:absolute;left:772.00px;top:491.00px;width:16.00px;height:199.00px;box-sizing:border-box;background:#f0f0f0;"></div>
<div style="position:absolute;left:776.00px;top:505.00px;width:8.00px;height:20.00px;box-sizing:border-box;background:#f8f8f8;"></div>
<div style="position:absolute;left:778.00px;top:507.00px;width:4.00px;height:16.00px;box-sizing:border-box;background:#858585;"></div>
<div style="position:absolute;left:30.00px;top:675.00px;width:758.00px;height:15.00px;box-sizing:border-box;background:#f0f0f0;"></div>
<div style="position:absolute;left:45.00px;top:679.00px;width:260.00px;height:8.00px;box-sizing:border-box;background:#f8f8f8;"></div>
<div style="position:absolute;left:47.00px;top:681.00px;width:256.00px;height:4.00px;box-sizing:border-box;background:#858585;"></div>
<div style="position:absolute;left:35.15px;top:703.74px;font-size:12.0px;line-height:12.0px;color:#000;white-space:pre;transform:scaleX(1.0514);transform-origin:0 0;">Found 707 record(s)</div>
<div style="position:absolute;left:169.00px;top:698.00px;width:86.00px;height:26.00px;box-sizing:border-box;background:#fdfdfd;border:1px solid #e6e6e6;border-radius:4px;"></div>
<div style="position:absolute;left:208.80px;top:705.64px;font-size:12.0px;line-height:12.0px;color:#8a8a8a;white-space:pre;">&lt;</div>
<svg style="position:absolute;left:344.20px;top:707.30px" width="6" height="9.7" viewBox="0 0 6 9.7"><path d="M0.6 2.6 L3.3 0.7 M3.3 0.3 V8.70" stroke="#111" stroke-width="1.35" fill="none"/></svg>
<svg style="position:absolute;left:357px;top:706px" width="8" height="13" viewBox="0 0 8 13"><path d="M6.6 1.2 L1.6 11.2" stroke="#111" stroke-width="1.3"/></svg>
<svg style="position:absolute;left:376.40px;top:707.30px" width="6" height="9.7" viewBox="0 0 6 9.7"><path d="M0.6 2.6 L3.3 0.7 M3.3 0.3 V8.70" stroke="#111" stroke-width="1.35" fill="none"/></svg>
<div style="position:absolute;left:485.00px;top:698.00px;width:85.00px;height:26.00px;box-sizing:border-box;background:#fdfdfd;border:1px solid #e6e6e6;border-radius:4px;"></div>
<div style="position:absolute;left:523.68px;top:705.64px;font-size:12.0px;line-height:12.0px;color:#8a8a8a;white-space:pre;transform:scaleX(1.0345);transform-origin:0 0;">&gt;</div>
<div style="position:absolute;left:601.00px;top:698.00px;width:85.00px;height:26.00px;box-sizing:border-box;background:#fefefe;border:1px solid #d5d5d5;border-bottom-color:#c2c2c2;border-radius:4px;"></div>
<div style="position:absolute;left:625.42px;top:705.14px;font-size:12.0px;line-height:12.0px;color:#000;white-space:pre;transform:scaleX(1.1258);transform-origin:0 0;">Go to:</div>
<div style="position:absolute;left:692.00px;top:696.00px;width:98.00px;height:44.00px;box-sizing:border-box;background:#fff;border:1px solid #e3e3e3;border-radius:2px;"></div>
<svg style="position:absolute;left:697.00px;top:704.00px" width="6" height="10.0" viewBox="0 0 6 10.0"><path d="M0.6 2.6 L3.3 0.7 M3.3 0.3 V9.00" stroke="#111" stroke-width="1.35" fill="none"/></svg>
<div style="position:absolute;left:0.00px;top:726.00px;width:837.00px;height:36.00px;box-sizing:border-box;background:#f0f0f0;"></div>
<div style="position:absolute;left:4.00px;top:725.00px;width:834.00px;height:1.00px;box-sizing:border-box;background:#e2e2e2;"></div>
<div style="position:absolute;left:763.00px;top:730.00px;width:85.00px;height:24.00px;box-sizing:border-box;background:#fefefe;border:1px solid #d5d5d5;border-bottom-color:#c2c2c2;border-radius:4px;"></div>
<div style="position:absolute;left:782.11px;top:737.04px;font-size:12.0px;line-height:12.0px;color:#000;white-space:pre;transform:scaleX(0.9848);transform-origin:0 0;">Close(C)</div>
</body></html>
